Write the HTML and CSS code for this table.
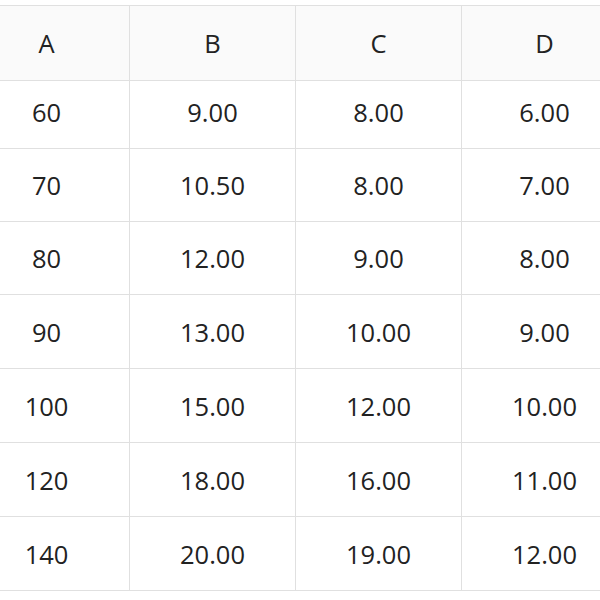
FILE: index.html
```html
<!DOCTYPE html>
<html>
<head>
<meta charset="utf-8">
<link rel="stylesheet" href="styles.css">
</head>
<body>
<table class="grid">
  <thead>
    <tr class="head"><th>A</th><th>B</th><th>C</th><th>D</th></tr>
  </thead>
  <tbody>
    <tr class="r1"><td>60</td><td>9.00</td><td>8.00</td><td>6.00</td></tr>
    <tr class="r2"><td>70</td><td>10.50</td><td>8.00</td><td>7.00</td></tr>
    <tr class="r3"><td>80</td><td>12.00</td><td>9.00</td><td>8.00</td></tr>
    <tr class="r4"><td>90</td><td>13.00</td><td>10.00</td><td>9.00</td></tr>
    <tr class="r5"><td>100</td><td>15.00</td><td>12.00</td><td>10.00</td></tr>
    <tr class="r6"><td>120</td><td>18.00</td><td>16.00</td><td>11.00</td></tr>
    <tr class="r7"><td>140</td><td>20.00</td><td>19.00</td><td>12.00</td></tr>
  </tbody>
</table>
</body>
</html>
```

FILE: styles.css
```css
html, body {
  margin: 0;
  padding: 0;
  background: #ffffff;
  overflow: hidden;
}
body {
  padding-top: 5px;
}
.grid {
  border-collapse: collapse;
  table-layout: fixed;
  width: 664px;
  margin-left: -37px;
  font-family: "Open Sans", "Noto Sans", sans-serif;
  font-size: 25.5px;
  color: #222222;
}
.grid th, .grid td {
  width: 165px;
  border: 1px solid #e0e0e0;
  text-align: center;
  vertical-align: middle;
  padding: 0;
  font-weight: 400;
}
.head th {
  background: #fafafa;
  height: 74px;
}
.r1 td { height: 61px; padding-bottom: 6px; }
.r2 td, .r3 td { height: 72px; }
.r4 td, .r5 td, .r6 td, .r7 td { height: 73px; }
```
